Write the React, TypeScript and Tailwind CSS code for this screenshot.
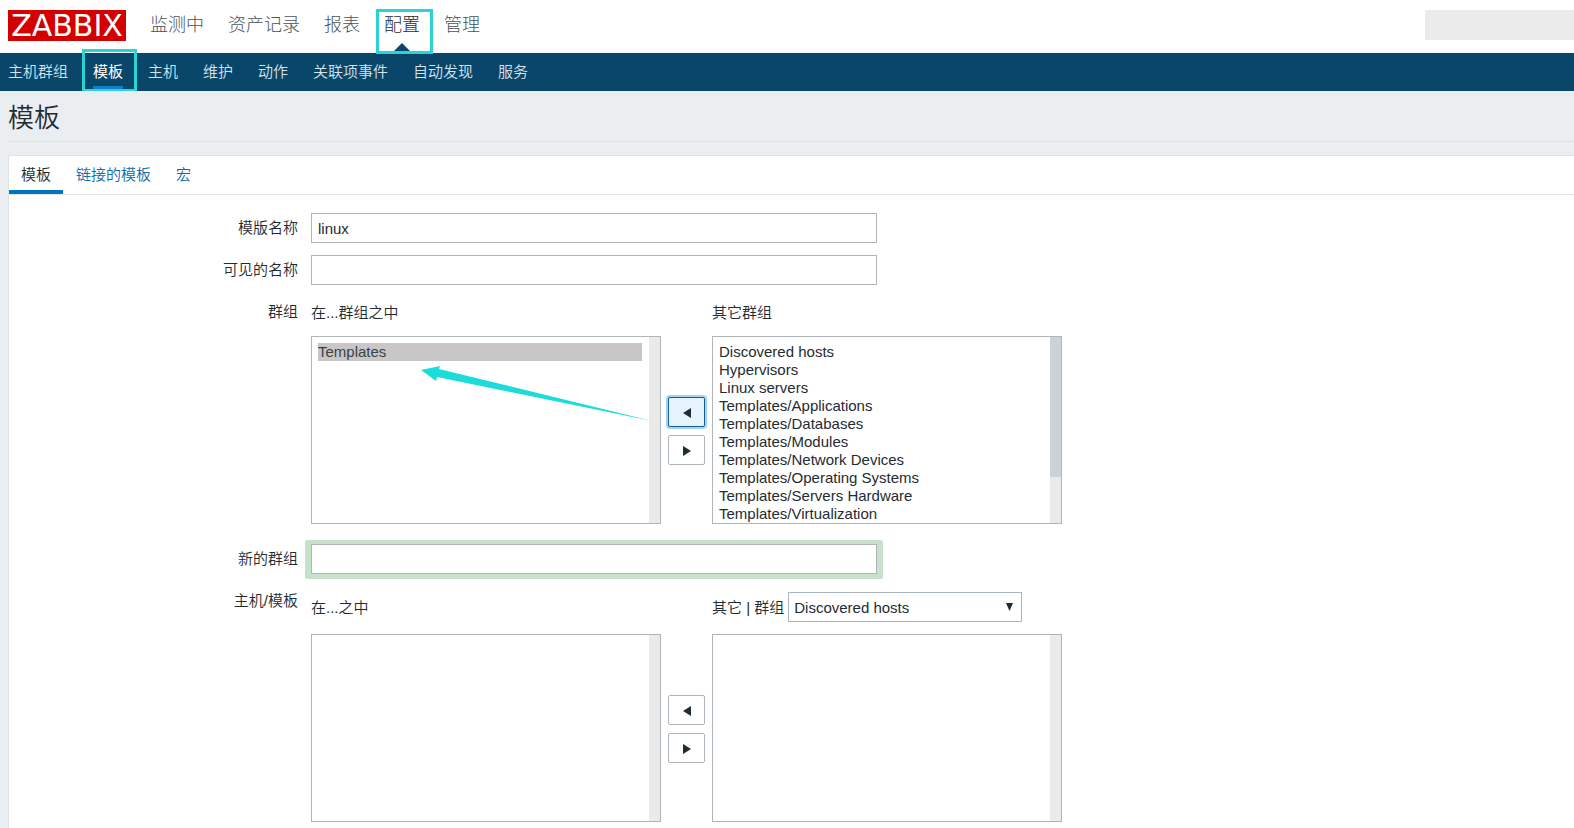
import { useState, type ReactNode } from "react";
import clsx from "clsx";

const MAIN_MENU = ["监测中", "资产记录", "报表", "配置", "管理"];
const SUB_MENU = ["主机群组", "模板", "主机", "维护", "动作", "关联项事件", "自动发现", "服务"];
const TABS = ["模板", "链接的模板", "宏"];

const OTHER_GROUPS = [
  "Discovered hosts",
  "Hypervisors",
  "Linux servers",
  "Templates/Applications",
  "Templates/Databases",
  "Templates/Modules",
  "Templates/Network Devices",
  "Templates/Operating Systems",
  "Templates/Servers Hardware",
  "Templates/Virtualization",
];

const INPUT = "h-[30px] w-[566px] max-w-full border border-[#b0b5ba] bg-white px-1.5 outline-none";

function Header() {
  return (
    <header className="flex h-[53px] bg-white pl-2">
      <a
        href="#"
        className="mt-2.5 flex h-[31px] w-[118px] shrink-0 items-center justify-center bg-[#d40000] font-['DejaVu_Sans',sans-serif] text-[30px] leading-none font-normal text-white"
      >
        ZABBIX
      </a>
      <nav className="ml-6 flex gap-6 text-lg font-light whitespace-nowrap">
        {MAIN_MENU.map((item) => {
          const active = item === "配置";
          return (
            <a
              key={item}
              href="#"
              className={clsx("relative h-[53px] leading-[50px]", active ? "text-[#1f2c33]" : "text-[#4a5359]")}
            >
              {item}
              {active && (
                <>
                  <svg className="absolute bottom-0.5 left-2.5" width="16" height="8" viewBox="0 0 16 8">
                    <path d="M8 0 16 8H0z" fill="#0a466a" />
                  </svg>
                  <span className="absolute -top-px -right-[13px] -bottom-px -left-2 mt-2.5 border-[3px] border-[#2bd4d4]" />
                </>
              )}
            </a>
          );
        })}
      </nav>
      <div className="mt-2.5 ml-auto h-[30px] w-[149px] bg-[#ebebeb]" />
    </header>
  );
}

function SubMenu() {
  return (
    <nav className="flex h-[38px] gap-[25px] bg-[#0a466a] pl-2 whitespace-nowrap">
      {SUB_MENU.map((item) => {
        const active = item === "模板";
        return (
          <a
            key={item}
            href="#"
            className={clsx("relative leading-[38px]", active ? "font-normal text-white" : "text-[#d5e3ec]")}
          >
            {item}
            {active && (
              <>
                <span className="absolute inset-x-0 bottom-0.5 h-[3px] bg-[#0f80c4]" />
                <span className="absolute -top-1 -right-3.5 bottom-0 -left-[11px] border-[3px] border-b-2 border-[#2bd4d4]" />
              </>
            )}
          </a>
        );
      })}
    </nav>
  );
}

function Row({ label, htmlFor, children }: { label: string; htmlFor: string; children: ReactNode }) {
  return (
    <div className="flex gap-[13px]">
      <label htmlFor={htmlFor} className="w-[289px] shrink-0 text-right leading-[29px]">
        {label}
      </label>
      <div className="min-w-0">{children}</div>
    </div>
  );
}

type ListBoxProps = {
  id: string;
  label: string;
  options?: string[];
  selected?: string[];
  thumb?: boolean;
  children?: ReactNode;
};

function ListBox({ id, label, options = [], selected = [], thumb, children }: ListBoxProps) {
  return (
    <div className="relative h-[188px] w-[350px] border border-[#b0b5ba] bg-white">
      <select
        id={id}
        multiple
        aria-label={label}
        defaultValue={selected}
        className="block h-full w-full [scrollbar-width:none] bg-transparent pt-1.5 pr-[18px] pl-1.5 outline-none"
      >
        {options.map((o) => (
          <option key={o} value={o} className="h-[18px] p-0 leading-[18px] checked:bg-[#c8c6c7] checked:text-[#3b4247]">
            {o}
          </option>
        ))}
      </select>
      <div className="absolute inset-y-0 right-0 w-[11px] bg-[#eaeaea]">
        {thumb && <div className="h-[140px] bg-[#cad3d7]" />}
      </div>
      {children}
    </div>
  );
}

function MoveButton({ dir, active }: { dir: "left" | "right"; active?: boolean }) {
  return (
    <button
      type="button"
      aria-label={dir === "left" ? "添加" : "移除"}
      className={clsx(
        "flex h-[30px] w-[37px] items-center justify-center rounded-xs border pt-0.5",
        active ? "border-[#0f6296] bg-[#e6f3fd] shadow-[0_0_0_2px_#a6d2f5]" : "border-[#b0b5ba] bg-white"
      )}
    >
      <svg width="8" height="10" viewBox="0 0 8 10" fill="#1f2c33">
        <path d={dir === "left" ? "M8 0v10L0 5z" : "M0 0v10l8-5z"} />
      </svg>
    </button>
  );
}

function Transfer({ left, right, active }: { left: ReactNode; right: ReactNode; active?: boolean }) {
  return (
    <div className="flex items-center gap-[7px]">
      {left}
      <div className="flex flex-col gap-2 pt-0.5">
        <MoveButton dir="left" active={active} />
        <MoveButton dir="right" />
      </div>
      {right}
    </div>
  );
}

export default function App() {
  const [tab, setTab] = useState("模板");

  return (
    <div className="flex min-h-screen flex-col bg-[#ebeef0] font-['Liberation_Sans','Noto_Sans_CJK_SC',sans-serif] text-[15px] font-[350] text-[#1f2c33]">
      <Header />
      <SubMenu />
      <main className="flex flex-1 flex-col pl-2">
        <h1 className="h-[51px] border-b border-[#dfe3e5] text-[26px] leading-[55px] font-[350]">模板</h1>

        <div className="mt-[13px] flex-1 border-t border-l border-[#dfe3e5] bg-white pb-1.5">
          <div role="tablist" className="flex h-[39px] gap-px border-b border-[#e3e6e8]">
            {TABS.map((t) => (
              <button
                key={t}
                type="button"
                role="tab"
                aria-selected={t === tab}
                onClick={() => setTab(t)}
                className={clsx(
                  "border-b-4 px-3 pt-1",
                  t === tab ? "border-[#0275b8]" : "border-transparent text-[#0f6ca8]"
                )}
              >
                {t}
              </button>
            ))}
          </div>

          <form className="flex flex-col gap-3 pt-[18px]">
            <Row label="模版名称" htmlFor="name">
              <input id="name" type="text" defaultValue="linux" className={INPUT} />
            </Row>
            <Row label="可见的名称" htmlFor="visible-name">
              <input id="visible-name" type="text" className={INPUT} />
            </Row>

            <Row label="群组" htmlFor="groups">
              <div className="mb-1.5 flex h-[33px] items-center">
                <span className="w-[401px]">在...群组之中</span>
                <span>其它群组</span>
              </div>
              <Transfer
                active
                left={
                  <ListBox id="groups" label="在群组之中" options={["Templates"]} selected={["Templates"]}>
                    <svg
                      className="pointer-events-none absolute top-[29px] left-[109px]"
                      width="232"
                      height="56"
                      viewBox="0 0 232 56"
                    >
                      <path d="M0 4 19 0l-1 3 213 52L16 11l-1 4z" fill="#1bdcdb" />
                    </svg>
                  </ListBox>
                }
                right={<ListBox id="other-groups" label="其它群组" options={OTHER_GROUPS} thumb />}
              />
            </Row>

            <div className="pt-2">
              <Row label="新的群组" htmlFor="new-group">
                <div className="-mx-1.5 -mt-1 -mb-[5px] rounded-xs bg-[#c6e2cb] px-1.5 pt-1 pb-[5px]">
                  <input id="new-group" type="text" className={clsx(INPUT, "block")} />
                </div>
              </Row>
            </div>

            <Row label="主机/模板" htmlFor="hosts">
              <div className="mt-1.5 mb-3 flex h-[30px] items-center">
                <span className="w-[401px] pt-0.5">在...之中</span>
                <label htmlFor="group-filter" className="mr-1 pt-0.5">
                  其它 | 群组
                </label>
                <div className="relative">
                  <select
                    id="group-filter"
                    className="block h-[30px] w-[234px] appearance-none border border-[#a9b6c2] bg-white px-[5px] pt-0.5 outline-none"
                  >
                    <option>Discovered hosts</option>
                  </select>
                  <svg
                    className="pointer-events-none absolute top-[11px] right-[9px]"
                    width="7"
                    height="8"
                    viewBox="0 0 7 8"
                  >
                    <path d="M0 0h7L3.500 8z" fill="#1f2c33" />
                  </svg>
                </div>
              </div>
              <Transfer
                left={<ListBox id="hosts" label="在之中" />}
                right={<ListBox id="other-hosts" label="其它" />}
              />
            </Row>
          </form>
        </div>
      </main>
    </div>
  );
}
